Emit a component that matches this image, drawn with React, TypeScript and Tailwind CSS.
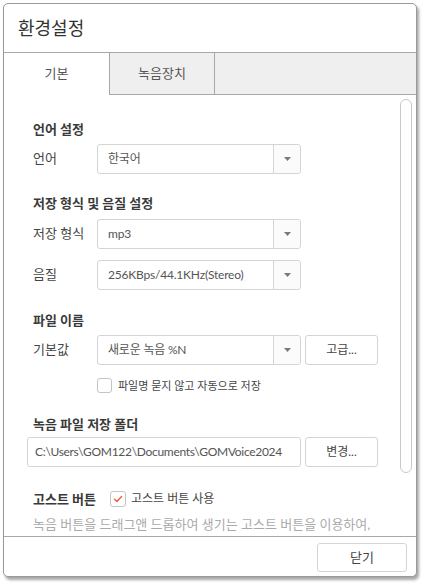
import React from "react";

const font = { fontFamily: '"Lato", "Noto Sans CJK KR", sans-serif' };

function Arrow() {
  return (
    <svg width="7" height="4" viewBox="0 0 7 4">
      <path d="M0 0 L7 0 L3.5 4 Z" fill="#7a7a7a" />
    </svg>
  );
}

function Select({ value }: { value: string }) {
  return (
    <div className="w-[204px] shrink-0 h-[30px] border border-[#d4d4d4] rounded-[3px] flex items-stretch bg-white">
      <div className="flex-1 flex items-center pl-[10px] text-[12px] tracking-[-0.2px] text-[#555] whitespace-nowrap overflow-hidden">
        {value}
      </div>
      <div className="w-[27px] border-l border-[#d4d4d4] flex items-center justify-center bg-[#fbfbfb] rounded-r-[3px]">
        <Arrow />
      </div>
    </div>
  );
}

function Btn({ label }: { label: string }) {
  return (
    <div className="w-[73px] shrink-0 h-[30px] border border-[#d4d4d4] rounded-[3px] flex items-center justify-center text-[12px] text-[#444] bg-white">
      {label}
    </div>
  );
}

function Heading({ children }: { children: React.ReactNode }) {
  return <div className="h-[18px] leading-[18px] text-[13px] font-bold text-[#3a3a3a] whitespace-nowrap">{children}</div>;
}

export default function App() {
  return (
    <div className="w-[424px] h-[584px] bg-white pt-[3px] pl-[3px]" style={font}>
      <div className="w-[414px] h-[574px] border border-[#9a9a9a] rounded-[5px] shadow-[2px_3px_3px_rgba(0,0,0,0.35)] flex flex-col overflow-hidden bg-white">
        {/* title */}
        <div className="h-[49px] shrink-0 border-b border-[#a8a8a8] flex items-center pl-[14px] text-[18px] text-[#333]">
          환경설정
        </div>
        {/* tabs */}
        <div className="h-[42px] shrink-0 flex">
          <div className="w-[106px] border-r border-[#a8a8a8] bg-white flex items-center justify-center text-[13px] text-[#555]">
            기본
          </div>
          <div className="w-[105px] border-r border-b border-[#a8a8a8] bg-[#efefef] flex items-center justify-center text-[13px] text-[#555]">
            녹음장치
          </div>
          <div className="flex-1 border-b border-[#a8a8a8] bg-[#efefef]" />
        </div>
        {/* content */}
        <div className="flex-1 relative overflow-hidden">
          <div className="absolute left-[396px] top-[4px] w-[12px] h-[374px] border border-[#c8c8c8] rounded-[6px] bg-white" />
          <div className="pt-[25px] pl-[29px] pr-[20px]">
            <Heading>언어 설정</Heading>
            <div className="mt-[6px] flex items-center">
              <div className="w-[64px] shrink-0 text-[13px] text-[#444]">언어</div>
              <Select value="한국어" />
            </div>

            <div className="mt-[20px]">
              <Heading>저장 형식 및 음질 설정</Heading>
            </div>
            <div className="mt-[7px] flex items-center">
              <div className="w-[64px] shrink-0 text-[13px] text-[#444]">저장 형식</div>
              <Select value="mp3" />
            </div>
            <div className="mt-[11px] flex items-center">
              <div className="w-[64px] shrink-0 text-[13px] text-[#444]">음질</div>
              <Select value="256KBps/44.1KHz(Stereo)" />
            </div>

            <div className="mt-[21px]">
              <Heading>파일 이름</Heading>
            </div>
            <div className="mt-[6px] flex items-center">
              <div className="w-[64px] shrink-0 text-[13px] text-[#444]">기본값</div>
              <Select value="새로운 녹음 %N" />
              <div className="ml-[4px]">
                <Btn label="고급..." />
              </div>
            </div>
            <div className="mt-[13px] flex items-center pl-[64px]">
              <div className="w-[15px] h-[15px] border border-[#c4c4c4] rounded-[3px] bg-white" />
              <div className="ml-[6px] text-[11px] text-[#444] leading-[15px]">파일명 묻지 않고 자동으로 저장</div>
            </div>

            <div className="mt-[22px]">
              <Heading>녹음 파일 저장 폴더</Heading>
            </div>
            <div className="mt-[4px] -ml-[6px] flex items-center">
              <div className="w-[274px] shrink-0 h-[30px] border border-[#d4d4d4] rounded-[3px] flex items-center pl-[7px] text-[12px] tracking-[-0.3px] text-[#555] whitespace-nowrap overflow-hidden">
                C:\Users\GOM122\Documents\GOMVoice2024
              </div>
              <div className="ml-[4px]">
                <Btn label="변경..." />
              </div>
            </div>

            <div className="mt-[23px] flex items-center">
              <Heading>고스트 버튼</Heading>
              <div className="ml-[14px] w-[16px] h-[16px] border border-[#c4c4c4] rounded-[3px] bg-white flex items-center justify-center">
                <svg width="10" height="8" viewBox="0 0 10 8">
                  <path d="M1.5 4.2 L3.9 6.4 L8.6 1.6" fill="none" stroke="#f05a32" strokeWidth="1.4" strokeLinecap="round" strokeLinejoin="round" />
                </svg>
              </div>
              <div className="ml-[5px] text-[12px] text-[#444]">고스트 버튼 사용</div>
            </div>
            <div className="mt-[7px] text-[13px] leading-[18px] text-[#aaa] whitespace-nowrap">
              녹음 버튼을 드래그앤 드롭하여 생기는 고스트 버튼을 이용하여,
            </div>
          </div>
        </div>
        {/* footer */}
        <div className="h-[40px] shrink-0 border-t border-[#a8a8a8] flex justify-end pt-[6px] pr-[9px]">
          <div className="w-[90px] h-[29px] border border-[#d4d4d4] rounded-[3px] flex items-center justify-center text-[13px] text-[#444]">
            닫기
          </div>
        </div>
      </div>
    </div>
  );
}
